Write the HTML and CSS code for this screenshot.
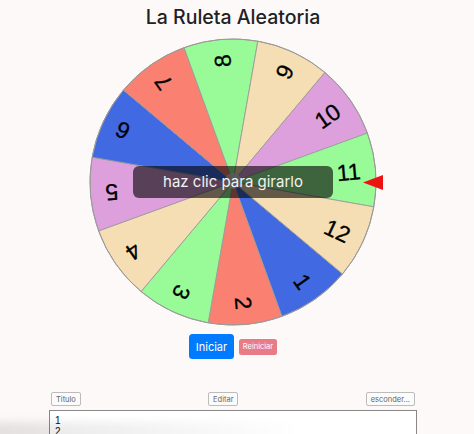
FILE: index.html
```html
<!DOCTYPE html>
<html lang="es">
<head>
<meta charset="utf-8">
<title>La Ruleta Aleatoria</title>
<link rel="stylesheet" href="styles.css">
</head>
<body>
<div class="page">
  <h1 class="title">La Ruleta Aleatoria</h1>
  <div class="wheel">
    <svg class="wheel-svg" width="290" height="290" viewBox="0 0 290 290">
      <g transform="rotate(55 145 145)"><path class="seg blue" d="M145 145 L283.13 107.99 A143 143 0 0 1 283.13 182.01 Z"/><text class="num" x="273" y="145" dy="0.36em" text-anchor="end">1</text></g>
      <g transform="rotate(85 145 145)"><path class="seg salmon" d="M145 145 L283.13 107.99 A143 143 0 0 1 283.13 182.01 Z"/><text class="num" x="273" y="145" dy="0.36em" text-anchor="end">2</text></g>
      <g transform="rotate(115 145 145)"><path class="seg green" d="M145 145 L283.13 107.99 A143 143 0 0 1 283.13 182.01 Z"/><text class="num" x="273" y="145" dy="0.36em" text-anchor="end">3</text></g>
      <g transform="rotate(145 145 145)"><path class="seg wheat" d="M145 145 L283.13 107.99 A143 143 0 0 1 283.13 182.01 Z"/><text class="num" x="273" y="145" dy="0.36em" text-anchor="end">4</text></g>
      <g transform="rotate(175 145 145)"><path class="seg plum" d="M145 145 L283.13 107.99 A143 143 0 0 1 283.13 182.01 Z"/><text class="num" x="273" y="145" dy="0.36em" text-anchor="end">5</text></g>
      <g transform="rotate(205 145 145)"><path class="seg blue" d="M145 145 L283.13 107.99 A143 143 0 0 1 283.13 182.01 Z"/><text class="num" x="273" y="145" dy="0.36em" text-anchor="end">6</text></g>
      <g transform="rotate(235 145 145)"><path class="seg salmon" d="M145 145 L283.13 107.99 A143 143 0 0 1 283.13 182.01 Z"/><text class="num" x="273" y="145" dy="0.36em" text-anchor="end">7</text></g>
      <g transform="rotate(265 145 145)"><path class="seg green" d="M145 145 L283.13 107.99 A143 143 0 0 1 283.13 182.01 Z"/><text class="num" x="273" y="145" dy="0.36em" text-anchor="end">8</text></g>
      <g transform="rotate(295 145 145)"><path class="seg wheat" d="M145 145 L283.13 107.99 A143 143 0 0 1 283.13 182.01 Z"/><text class="num" x="273" y="145" dy="0.36em" text-anchor="end">9</text></g>
      <g transform="rotate(325 145 145)"><path class="seg plum" d="M145 145 L283.13 107.99 A143 143 0 0 1 283.13 182.01 Z"/><text class="num" x="273" y="145" dy="0.36em" text-anchor="end">10</text></g>
      <g transform="rotate(355 145 145)"><path class="seg green" d="M145 145 L283.13 107.99 A143 143 0 0 1 283.13 182.01 Z"/><text class="num" x="273" y="145" dy="0.36em" text-anchor="end">11</text></g>
      <g transform="rotate(25 145 145)"><path class="seg wheat" d="M145 145 L283.13 107.99 A143 143 0 0 1 283.13 182.01 Z"/><text class="num" x="273" y="145" dy="0.36em" text-anchor="end">12</text></g>
      <circle class="rim" cx="145" cy="145" r="143"/>
      <circle class="hub" cx="145" cy="144" r="8"/>
    </svg>
    <svg class="pointer" width="20" height="15" viewBox="0 0 20 15"><polygon class="pointer-shape" points="0,7.5 20,0 20,15"/></svg>
    <div class="hint">haz clic para girarlo</div>
  </div>
  <div class="controls">
    <button class="btn btn-start">Iniciar</button>
    <button class="btn btn-reset">Reiniciar</button>
  </div>
  <div class="toolbar">
    <button class="tbtn">Titulo</button>
    <button class="tbtn">Editar</button>
    <button class="tbtn">esconder...</button>
  </div>
  <textarea class="list">1
2
3
4</textarea>
</div>
<div class="shade"></div>
</body>
</html>
```
FILE: styles.css
```css
html, body {
  margin: 0;
  padding: 0;
}
body {
  background: #fdf9f8;
  overflow: hidden;
  height: 434px;
  font-family: Inter, "Liberation Sans", sans-serif;
}
.page {
  width: 466px;
  display: flex;
  flex-direction: column;
  align-items: center;
}
.title {
  margin: 5px 0 0;
  font-size: 19.5px;
  line-height: 24px;
  font-weight: 500;
  color: #1e2125;
}
.wheel {
  position: relative;
  width: 290px;
  height: 290px;
  margin-top: 8px;
}
.wheel-svg {
  display: block;
}
.seg {
  stroke: #9a9a9a;
  stroke-width: 0.8;
}
.blue { fill: #4169e1; }
.salmon { fill: #fa8072; }
.green { fill: #98fb98; }
.wheat { fill: #f5deb3; }
.plum { fill: #dda0dd; }
.rim {
  fill: none;
  stroke: #9a9a9a;
  stroke-width: 1;
}
.hub {
  fill: #e4e4e4;
  opacity: 0.75;
}
.num {
  font-family: "Liberation Sans", Arial, sans-serif;
  font-size: 23px;
  fill: #000;
  stroke: #000;
  stroke-width: 0.3;
}
.pointer {
  position: absolute;
  left: 275px;
  top: 138px;
}
.pointer-shape {
  fill: #ee1111;
}
.hint {
  position: absolute;
  left: 45px;
  top: 129px;
  width: 200px;
  height: 32px;
  border-radius: 6px;
  background: rgba(0, 0, 0, 0.6);
  color: #f2f2f2;
  font-size: 15px;
  line-height: 32px;
  text-align: center;
}
.controls {
  margin-top: 7px;
  display: flex;
  align-items: center;
  gap: 5px;
}
.btn {
  border: none;
  color: #fff;
  font-family: Inter, "Liberation Sans", sans-serif;
  padding: 0;
  cursor: pointer;
}
.btn-start {
  background: #007bff;
  height: 25px;
  width: 45px;
  border-radius: 3.5px;
  font-size: 11px;
}
.btn-reset {
  background: #e87b86;
  height: 16px;
  width: 38px;
  border-radius: 2.5px;
  font-size: 7.5px;
}
.toolbar {
  margin-top: 33px;
  width: 364px;
  display: flex;
  justify-content: space-between;
}
.tbtn {
  height: 14px;
  padding: 0 4px;
  font-family: Inter, "Liberation Sans", sans-serif;
  font-size: 7.5px;
  color: #666;
  background: #fbfbfb;
  border: 1px solid #bcbcbc;
  border-radius: 2px;
}
.list {
  display: block;
  margin-top: 4px;
  width: 368px;
  height: 60px;
  box-sizing: border-box;
  border: 1px solid #888;
  background: #fff;
  padding: 3.5px 5px;
  font-family: "Liberation Sans", Arial, sans-serif;
  font-size: 10px;
  line-height: 11px;
  color: #111;
  resize: none;
  overflow: hidden;
}
.shade {
  position: fixed;
  left: -20px;
  top: 422px;
  width: 320px;
  height: 22px;
  background: linear-gradient(to right, rgba(0, 0, 0, 0.1), rgba(0, 0, 0, 0.05) 50%, rgba(0, 0, 0, 0));
  filter: blur(4px);
  pointer-events: none;
}
```
